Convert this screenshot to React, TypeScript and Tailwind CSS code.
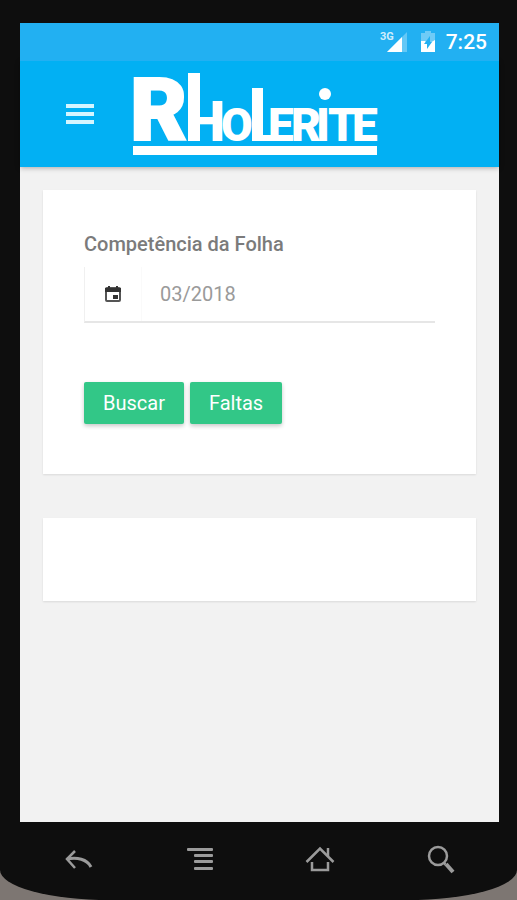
import React from "react";

function Logo() {
  return (
    <svg viewBox="0 0 256 84" className="h-[84px] w-[256px] shrink-0 overflow-visible" fill="white" role="img" aria-label="RHolerite">
      <g fontFamily="Roboto, 'Liberation Sans', sans-serif" fontWeight="900" fill="white" stroke="white">
        <text x="3" y="68" fontSize="88" strokeWidth="2">R</text>
        <text x="59" y="69" fontSize="56" strokeWidth="0">H</text>
        <text y="69" fontSize="46" strokeWidth="0" x="94 123 141 164 189 201 225">OLERITE</text>
      </g>
      <rect x="61" y="1" width="12" height="68" />
      <rect x="125" y="16" width="11" height="53" />
      <circle cx="198" cy="22" r="6" />
      <rect x="6" y="74" width="244" height="9" />
    </svg>
  );
}

function StatusBar() {
  return (
    <div className="relative z-10 flex h-[38px] items-center justify-end bg-[#22b0f2] pr-3 text-white">
      <svg viewBox="0 0 28 24" className="mr-3 h-6 w-7" aria-hidden="true">
        <text x="0" y="10" fontSize="11" fontWeight="700" fontFamily="Roboto, sans-serif" fill="white" fillOpacity=".8">3G</text>
        <path d="M7 22 27 2V22Z" fill="white" fillOpacity=".3" />
        <path d="M7 22 22 7V22Z" fill="white" />
      </svg>
      <svg viewBox="0 0 16 24" className="mr-[10px] h-6 w-4" aria-hidden="true">
        <path d="M5 1h6v2h4v9H1V3h4Z" fill="white" fillOpacity=".35" />
        <path d="M1 11h4l3 3 7-4v12H1Z" fill="white" />
        <path d="M10 6v6h2L7 19v-5H4Z" fill="#22b0f2" />
      </svg>
      <span className="text-[21px] font-medium leading-6">7:25</span>
    </div>
  );
}

const navButton = "flex h-10 w-10 items-center justify-center text-[#9b9b9b]";

function NavBar() {
  return (
    <nav className="flex h-[78px] items-center justify-between pb-1 pl-[39px] pr-[38px]">
      <button className={navButton} aria-label="Voltar">
        <svg viewBox="0 0 30 30" className="h-[30px] w-[30px]" fill="none" stroke="currentColor" strokeWidth="2.500">
          <path d="M11 7 3 15l8 9" />
          <path d="M3 15c10-2 20 0 24 8" strokeWidth="3" />
        </svg>
      </button>
      <button className={navButton} aria-label="Menu do sistema">
        <svg viewBox="0 0 30 30" className="h-[30px] w-[30px]" fill="currentColor">
          <rect x="2" y="4" width="26" height="3" rx="1" />
          <rect x="9" y="10" width="19" height="3" rx="1" />
          <rect x="9" y="16" width="19" height="3" rx="1" />
          <rect x="9" y="23" width="19" height="3" rx="1" />
        </svg>
      </button>
      <button className={navButton} aria-label="Início">
        <svg viewBox="0 0 30 30" className="h-[30px] w-[30px]" fill="none" stroke="currentColor" strokeWidth="2.500">
          <path d="M1.500 18 15 4.500 28.500 18" />
          <path d="M23 12V4" />
          <path d="M7 18v8h16v-8" />
        </svg>
      </button>
      <button className={navButton} aria-label="Pesquisar">
        <svg viewBox="0 0 30 30" className="h-[30px] w-[30px]" fill="none" stroke="currentColor">
          <circle cx="12" cy="12" r="9" strokeWidth="2.500" />
          <path d="m17.500 18.500 2 2" strokeWidth="2.500" />
          <path d="m20 20 7 8" strokeWidth="4" />
        </svg>
      </button>
    </nav>
  );
}

const actionButton =
  "h-[42px] rounded-xs bg-[#32c787] px-[19px] text-xl leading-6 text-white shadow-[0_2px_4px_rgba(0,0,0,0.22)]";

export default function App() {
  return (
    <div className="min-h-screen bg-[#7d7672] font-['Roboto',sans-serif]">
      <div className="flex min-h-screen flex-col rounded-[0_0_110px_110px/0_0_30px_30px] bg-[#0e0e0e] pl-5 pr-[18px] pt-[23px]">
        <div className="flex flex-1 flex-col bg-[#f2f2f2]">
          <StatusBar />
          <header className="flex h-[106px] items-center bg-[#02b0f3] pl-[46px] shadow-[0_1px_5px_rgba(0,0,0,0.3)]">
            <button className="mr-[33px] flex h-7 w-7 flex-col justify-center gap-1" aria-label="Abrir menu">
              <span className="h-1 w-full bg-[#d5f5ff]" />
              <span className="h-1 w-full bg-[#d5f5ff]" />
              <span className="h-1 w-full bg-[#d5f5ff]" />
            </button>
            <Logo />
          </header>
          <main className="flex flex-col gap-11 px-[23px] pt-[23px]">
            <form
              className="bg-white px-[41px] pb-[50px] pt-[42px] shadow-[0_1px_2px_rgba(0,0,0,0.1)]"
              onSubmit={(event) => event.preventDefault()}
            >
              <label htmlFor="competencia" className="block text-xl font-medium leading-6 text-[#7b7b7b]">
                Competência da Folha
              </label>
              <div className="mt-[11px] flex h-14 items-stretch border-b-2 border-l border-b-[#e6e6e6] border-l-[#f0f0f0]">
                <span className="flex w-[57px] items-center justify-center border-r border-[#fafafa]">
                  <svg viewBox="0 0 18 18" className="h-[18px] w-[18px]" aria-hidden="true">
                    <rect x="2" y="3" width="14" height="13" rx="1" fill="none" stroke="#555555" strokeWidth="2" />
                    <path d="M1 3h16v4H1ZM4 1h2v3H4ZM12 1h2v3h-2Z" fill="#333333" />
                    <rect x="9" y="10" width="5" height="4" fill="#333333" />
                  </svg>
                </span>
                <input
                  id="competencia"
                  type="text"
                  defaultValue="03/2018"
                  className="min-w-0 flex-1 bg-transparent pl-[18px] text-xl leading-6 text-[#9a9a9a] outline-none"
                />
              </div>
              <div className="mt-[59px] flex gap-[6px]">
                <button type="submit" className={actionButton}>Buscar</button>
                <button type="button" className={actionButton}>Faltas</button>
              </div>
            </form>
            <section className="h-[83px] bg-white shadow-[0_1px_2px_rgba(0,0,0,0.1)]" />
          </main>
        </div>
        <NavBar />
      </div>
    </div>
  );
}
